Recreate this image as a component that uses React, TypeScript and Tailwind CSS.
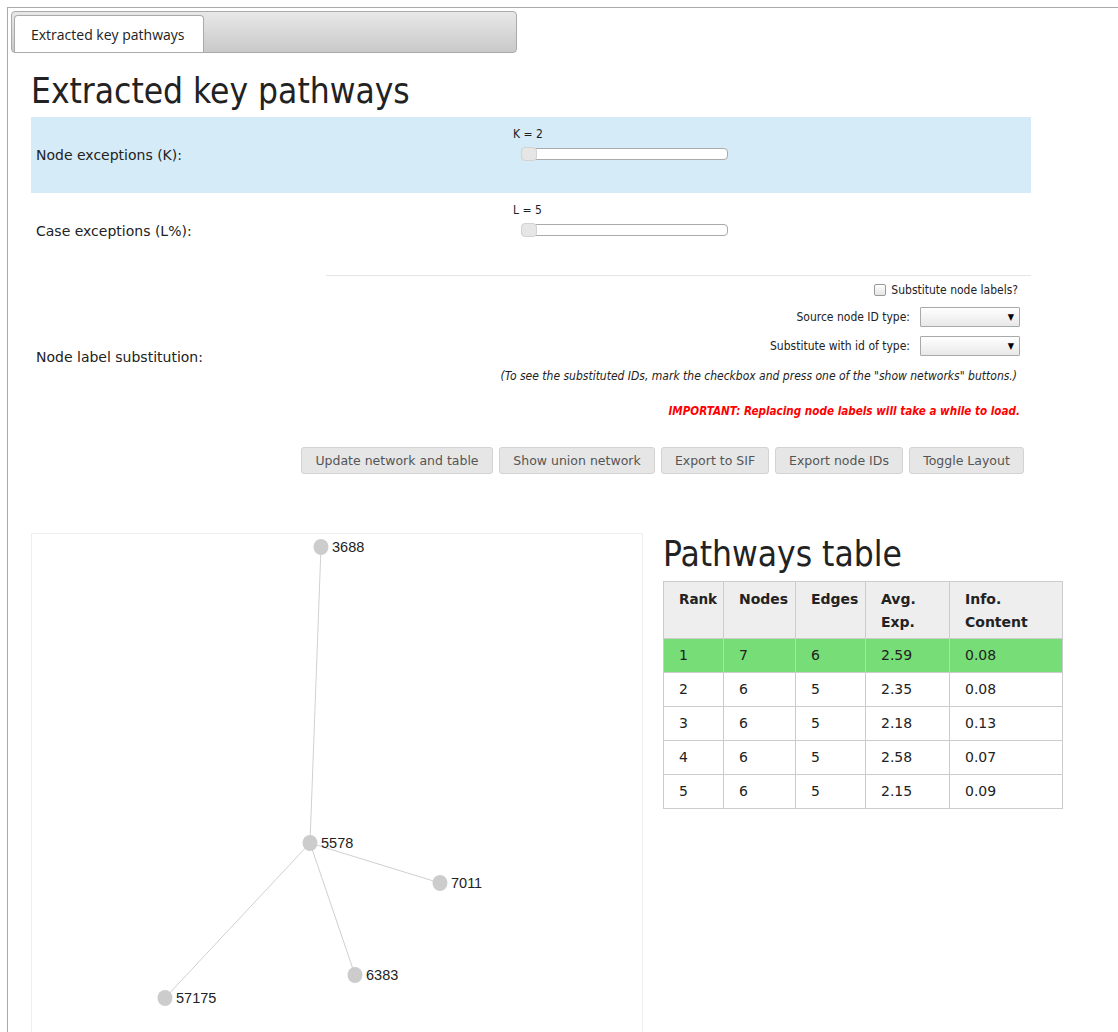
import React from 'react'

const cond = "font-['DejaVu_Sans_Condensed','DejaVu_Sans',sans-serif]"

type Row = { rank: number; nodes: number; edges: number; avg: string; info: string }

const rows: Row[] = [
  { rank: 1, nodes: 7, edges: 6, avg: '2.59', info: '0.08' },
  { rank: 2, nodes: 6, edges: 5, avg: '2.35', info: '0.08' },
  { rank: 3, nodes: 6, edges: 5, avg: '2.18', info: '0.13' },
  { rank: 4, nodes: 6, edges: 5, avg: '2.58', info: '0.07' },
  { rank: 5, nodes: 6, edges: 5, avg: '2.15', info: '0.09' },
]

const nodes = [
  { id: '3688', x: 289, y: 13 },
  { id: '5578', x: 278, y: 309 },
  { id: '7011', x: 408, y: 349 },
  { id: '6383', x: 323, y: 441 },
  { id: '57175', x: 133, y: 464 },
]

const edges: [number, number][] = [
  [0, 1],
  [1, 2],
  [1, 3],
  [1, 4],
]

function Slider({ label }: { label: string }) {
  return (
    <div className="flex flex-col">
      <span className={`${cond} pl-[1px] text-[12px] leading-[14px] text-[#222]`}>{label}</span>
      <div className="relative mt-[7px] ml-[9px] h-[12px] w-[207px] rounded-[4px] border border-[#aaa] bg-white">
        <div className="absolute top-[-2px] left-[-1px] h-[14px] w-[16px] rounded-[4px] border border-[#d3d3d3] bg-[#e6e6e6]" />
      </div>
    </div>
  )
}

function Select() {
  return (
    <div className="flex h-[20px] w-[100px] items-center justify-end rounded-[1px] border border-[#a9a9a9] bg-gradient-to-b from-white to-[#e8e8e8] pr-[5px]">
      <span className="text-[9px] leading-none text-black">▼</span>
    </div>
  )
}

function Btn({ children, w }: { children: React.ReactNode; w: string }) {
  return (
    <button
      className={`${w} h-[27px] rounded-[3px] border border-[#d3d3d3] bg-[#e6e6e6] font-['DejaVu_Sans',sans-serif] text-[12.5px] text-[#555]`}
    >
      {children}
    </button>
  )
}

function Graph() {
  return (
    <div className="relative h-[520px] w-[612px] border border-[#eee] bg-white">
      <svg className="absolute inset-0" width="612" height="520">
        {edges.map(([a, b]) => (
          <line
            key={`${a}-${b}`}
            x1={nodes[a].x}
            y1={nodes[a].y}
            x2={nodes[b].x}
            y2={nodes[b].y}
            stroke="#d0d0d0"
            strokeWidth="1"
          />
        ))}
        {nodes.map((n) => (
          <g key={n.id}>
            <ellipse cx={n.x} cy={n.y} rx="7.5" ry="8" fill="#cccccc" />
            <text
              x={n.x + 11}
              y={n.y + 5}
              fontSize="14.5"
              fill="#222"
              fontFamily="'Liberation Sans', Arial, sans-serif"
            >
              {n.id}
            </text>
          </g>
        ))}
      </svg>
    </div>
  )
}

function PathwaysTable() {
  const th = 'border border-[#ccc] px-[15px] pt-[6px] pb-[4px] align-top text-left font-bold'
  const td = 'border border-[#ccc] px-[15px] align-middle'
  return (
    <table className="w-[400px] table-fixed border-collapse font-['DejaVu_Sans',sans-serif] text-[14px] text-[#222]">
      <thead>
        <tr className="h-[57px] bg-[#eeeeee] leading-[23px]">
          <th className={`${th} w-[60px] text-[13.5px]`}>Rank</th>
          <th className={`${th} w-[72px]`}>Nodes</th>
          <th className={`${th} w-[70px]`}>Edges</th>
          <th className={`${th} w-[84px]`}>
            Avg.
            <br />
            Exp.
          </th>
          <th className={th}>
            Info.
            <br />
            Content
          </th>
        </tr>
      </thead>
      <tbody>
        {rows.map((r) => (
          <tr key={r.rank} className={`h-[34px] ${r.rank === 1 ? 'bg-[#77dd77]' : 'bg-white'}`}>
            <td className={td}>{r.rank}</td>
            <td className={td}>{r.nodes}</td>
            <td className={td}>{r.edges}</td>
            <td className={td}>{r.avg}</td>
            <td className={td}>{r.info}</td>
          </tr>
        ))}
      </tbody>
    </table>
  )
}

export default function App() {
  return (
    <div className="min-h-[1032px] bg-white pt-[7px] pl-[7px]">
      <div className="min-h-[1025px] border-t border-l border-[#aaa] pt-[3px] pl-[3px]">
        {/* tab strip */}
        <div className="flex h-[42px] w-[506px] items-end rounded-[4px] border border-[#aaa] bg-gradient-to-b from-[#e8e8e8] to-[#c9c9c9] pl-[2px]">
          <div className="flex h-[37px] w-[190px] items-center rounded-t-[4px] border border-b-0 border-[#aaa] bg-white pl-[16px] font-['Open_Sans',sans-serif] text-[14px] text-[#222]">
            Extracted key pathways
          </div>
        </div>

        <div className="pl-[20px]">
          <h1 className={`${cond} mt-[15px] h-[49px] text-[35px] leading-[47px] text-[#222]`}>
            Extracted key pathways
          </h1>

          {/* K slider */}
          <div className="flex h-[76px] w-[1000px] items-center bg-[#d5ebf8]">
            <div className="w-[481px] pl-[5px] font-['DejaVu_Sans',sans-serif] text-[14px] text-[#222]">
              Node exceptions (K):
            </div>
            <div className="-mt-[23px]">
              <Slider label="K = 2" />
            </div>
          </div>

          {/* L slider */}
          <div className="flex h-[76px] w-[1000px] items-center">
            <div className="w-[481px] pl-[5px] font-['DejaVu_Sans',sans-serif] text-[14px] text-[#222]">
              Case exceptions (L%):
            </div>
            <div className="-mt-[23px]">
              <Slider label="L = 5" />
            </div>
          </div>

          {/* label substitution */}
          <div className="mt-[6px] flex w-[1000px] items-center">
            <div className="mt-[20px] w-[295px] shrink-0 pl-[5px] font-['DejaVu_Sans',sans-serif] text-[14px] text-[#222]">
              Node label substitution:
            </div>
            <div className={`${cond} flex flex-1 flex-col items-end border-t border-[#e5e5e5] pr-[11px] text-[12px] text-[#222]`}>
              <label className="mt-[5px] flex items-center gap-[5px] pr-[2px]">
                <span className="h-[12px] w-[12px] rounded-[2px] border border-[#999] bg-gradient-to-b from-white to-[#e5e5e5]" />
                Substitute node labels?
              </label>
              <div className="mt-[8px] flex items-center gap-[10px]">
                <span>Source node ID type:</span>
                <Select />
              </div>
              <div className="mt-[9px] flex items-center gap-[10px]">
                <span>Substitute with id of type:</span>
                <Select />
              </div>
              <p className="mt-[11px] pr-[3px] italic">
                (To see the substituted IDs, mark the checkbox and press one of the "show networks" buttons.)
              </p>
              <p className="mt-[18px] text-[11.6px] font-bold italic text-[#ff0000]">
                IMPORTANT: Replacing node labels will take a while to load.
              </p>
            </div>
          </div>

          {/* buttons */}
          <div className="mt-[27px] flex w-[993px] justify-end gap-[6px]">
            <Btn w="w-[192px]">Update network and table</Btn>
            <Btn w="w-[156px]">Show union network</Btn>
            <Btn w="w-[108px]">Export to SIF</Btn>
            <Btn w="w-[128px]">Export node IDs</Btn>
            <Btn w="w-[115px]">Toggle Layout</Btn>
          </div>

          {/* graph + table */}
          <div className="mt-[59px] flex">
            <Graph />
            <div className="ml-[20px]">
              <h2 className={`${cond} mt-[1px] h-[47px] text-[35px] leading-[40px] text-[#222]`}>Pathways table</h2>
              <PathwaysTable />
            </div>
          </div>
        </div>
      </div>
    </div>
  )
}
